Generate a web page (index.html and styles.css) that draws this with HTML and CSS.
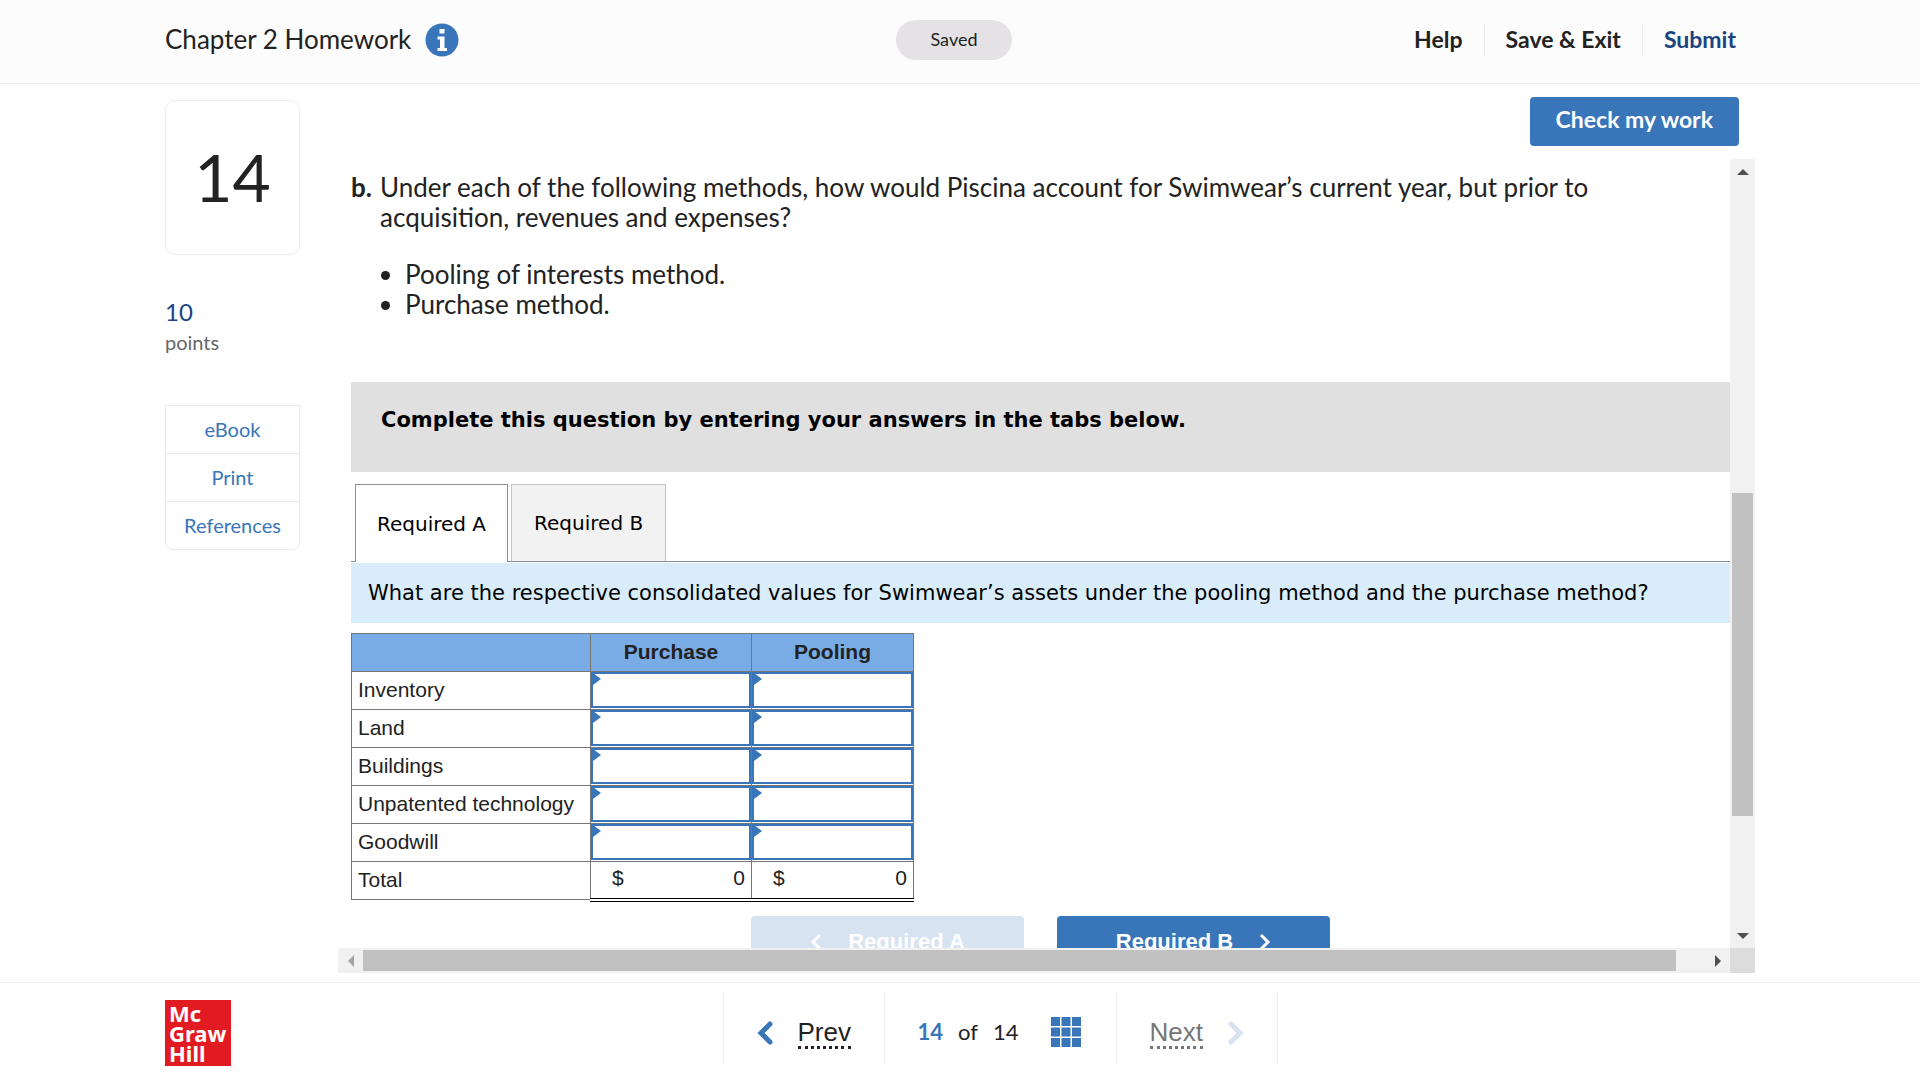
FILE: index.html
```html
<!DOCTYPE html>
<html lang="en">
<head>
    <meta charset="UTF-8">
    <meta name="viewport" content="width=device-width, initial-scale=1.0">
    <title>Chapter 2 Homework</title>
    <link rel="stylesheet" href="styles.css">
</head>
<body>
    <header class="top-bar">
        <div class="assignment">
            <h1>Chapter 2 Homework</h1>
            <button class="info-btn" type="button" aria-label="Assignment info">
                <svg width="34" height="34" viewBox="0 0 34 34">
                    <circle cx="17" cy="17" r="16.5" fill="#3875b9"/>
                    <path fill="#fff" d="M14.5 6h5v4.5h-5zM12.5 13.5h7v11.500h2.500v3h-9.500v-3h2.500v-8.500h-2.500z"/>
                </svg>
            </button>
        </div>
        <span class="saved">Saved</span>
        <nav class="top-links">
            <a href="#">Help</a>
            <a href="#">Save &amp; Exit</a>
            <a href="#" class="submit">Submit</a>
        </nav>
    </header>

    <main>
        <aside>
            <div class="question-number">14</div>
            <div class="points"><span>10</span>points</div>
            <div class="resources">
                <a href="#">eBook</a>
                <a href="#">Print</a>
                <a href="#">References</a>
            </div>
        </aside>

        <section class="question">
            <button class="check-btn" type="button">Check my work</button>
            <div class="scroller">
                <div class="content">
                    <div class="prompt">
                        <b>b.</b>
                        <div>
                            <p>Under each of the following methods, how would Piscina account for Swimwear’s current year, but prior to acquisition, revenues and expenses?</p>
                            <ul>
                                <li>Pooling of interests method.</li>
                                <li>Purchase method.</li>
                            </ul>
                        </div>
                    </div>
                    <div class="instructions">Complete this question by entering your answers in the tabs below.</div>
                    <div class="tabs">
                        <button type="button" class="tab active">Required A</button>
                        <button type="button" class="tab">Required B</button>
                    </div>
                    <p class="tab-question">What are the respective consolidated values for Swimwear’s assets under the pooling method and the purchase method?</p>

                    <table class="answers">
                        <thead>
                            <tr><th class="account"></th><th>Purchase</th><th>Pooling</th></tr>
                        </thead>
                        <tbody>
                            <tr>
                                <td>Inventory</td>
                                <td class="entry"><input type="text" aria-label="Inventory, purchase"></td>
                                <td class="entry"><input type="text" aria-label="Inventory, pooling"></td>
                            </tr>
                            <tr>
                                <td>Land</td>
                                <td class="entry"><input type="text" aria-label="Land, purchase"></td>
                                <td class="entry"><input type="text" aria-label="Land, pooling"></td>
                            </tr>
                            <tr>
                                <td>Buildings</td>
                                <td class="entry"><input type="text" aria-label="Buildings, purchase"></td>
                                <td class="entry"><input type="text" aria-label="Buildings, pooling"></td>
                            </tr>
                            <tr>
                                <td>Unpatented technology</td>
                                <td class="entry"><input type="text" aria-label="Unpatented technology, purchase"></td>
                                <td class="entry"><input type="text" aria-label="Unpatented technology, pooling"></td>
                            </tr>
                            <tr>
                                <td>Goodwill</td>
                                <td class="entry"><input type="text" aria-label="Goodwill, purchase"></td>
                                <td class="entry"><input type="text" aria-label="Goodwill, pooling"></td>
                            </tr>
                            <tr>
                                <td>Total</td>
                                <td class="total"><div><span>$</span><span>0</span></div></td>
                                <td class="total"><div><span>$</span><span>0</span></div></td>
                            </tr>
                        </tbody>
                    </table>

                    <div class="tab-nav">
                        <button type="button" disabled>
                            <svg width="12" height="18" viewBox="0 0 12 18"><path d="M10 2L3 9l7 7" fill="none" stroke="#fff" stroke-width="3"/></svg>
                            Required A
                        </button>
                        <button type="button">
                            Required B
                            <svg width="12" height="18" viewBox="0 0 12 18"><path d="M2 2l7 7-7 7" fill="none" stroke="#fff" stroke-width="3"/></svg>
                        </button>
                    </div>
                </div>

                <div class="bar vertical">
                    <span class="arrow"><svg width="12" height="6" viewBox="0 0 12 6"><path d="M6 0l6 6H0z" fill="#505050"/></svg></span>
                    <span class="before"></span>
                    <span class="thumb"></span>
                    <span class="after"></span>
                    <span class="arrow"><svg width="12" height="6" viewBox="0 0 12 6"><path d="M0 0h12L6 6z" fill="#505050"/></svg></span>
                </div>
                <div class="bar horizontal">
                    <span class="arrow"><svg width="6" height="12" viewBox="0 0 6 12"><path d="M6 0v12L0 6z" fill="#a3a3a3"/></svg></span>
                    <span class="thumb"></span>
                    <span class="after"></span>
                    <span class="arrow"><svg width="6" height="12" viewBox="0 0 6 12"><path d="M0 0l6 6-6 6z" fill="#505050"/></svg></span>
                </div>
                <div class="corner"></div>
            </div>
        </section>
    </main>

    <footer>
        <div class="logo">Mc<br>Graw<br>Hill</div>
        <nav class="pager">
            <a href="#" class="step">
                <svg width="16" height="24" viewBox="0 0 16 24"><path d="M13 3L4 12l9 9" fill="none" stroke="#3875b9" stroke-width="5" stroke-linecap="round"/></svg>
                <span>Prev</span>
            </a>
            <div class="position">
                <b>14</b><span class="of">of</span><span>14</span>
                <button type="button" aria-label="Question list">
                    <svg width="30" height="30" viewBox="0 0 30 30" fill="#3875b9">
                        <path d="M0 0h9v9H0zM10.500 0h9v9h-9zM21 0h9v9h-9zM0 10.500h9v9H0zM10.500 10.500h9v9h-9zM21 10.500h9v9h-9zM0 21h9v9H0zM10.500 21h9v9h-9zM21 21h9v9h-9z"/>
                    </svg>
                </button>
            </div>
            <a href="#" class="step next">
                <span>Next</span>
                <svg width="16" height="24" viewBox="0 0 16 24"><path d="M3 3l9 9-9 9" fill="none" stroke="#d7e3f1" stroke-width="5" stroke-linecap="round"/></svg>
            </a>
        </nav>
    </footer>
</body>
</html>
```
FILE: styles.css
```css
* {
    box-sizing: border-box;
}
body {
    margin: 0;
    height: 100vh;
    display: flex;
    flex-direction: column;
    font-family: Lato, sans-serif;
    color: #222;
    background: #fff;
}
a {
    text-decoration: none;
    color: inherit;
}
button {
    font: inherit;
    border: none;
    padding: 0;
    cursor: pointer;
}
svg {
    display: block;
}

/* header */
.top-bar {
    display: grid;
    grid-template-columns: 1fr auto 1fr;
    align-items: center;
    height: 84px;
    padding: 0 177px 4px 165px;
    background: #fcfcfc;
    border-bottom: 1px solid #eee;
}
.assignment {
    display: flex;
    align-items: center;
    gap: 14px;
}
h1 {
    margin: 0;
    font-size: 26px;
    font-weight: normal;
    line-height: 32px;
    padding-bottom: 2px;
}
.info-btn {
    background: none;
}
.saved {
    width: 116px;
    height: 40px;
    line-height: 38px;
    border-radius: 20px;
    background: #e4e2e5;
    font-size: 18px;
    text-align: center;
}
.top-links {
    display: flex;
    justify-content: flex-end;
    padding-right: 7px;
    font-size: 23px;
    font-weight: bold;
    line-height: 32px;
}
.top-links a {
    padding: 0 21px 2px;
    border-left: 1px solid #eee;
}
.top-links a:first-child {
    border-left: none;
}
.top-links .submit {
    padding-right: 0;
    color: #194480;
}

/* main area */
main {
    flex: 1;
    min-height: 0;
    display: flex;
    gap: 38px;
    padding: 13px 165px 9px;
}
aside {
    width: 135px;
    padding-top: 3px;
}
.question-number {
    height: 155px;
    line-height: 152px;
    border: 1px solid #ececec;
    border-radius: 10px;
    font-size: 66px;
    text-align: center;
}
.points {
    margin-top: 42px;
    font-size: 20px;
    line-height: 30px;
    color: #666;
}
.points span {
    display: block;
    font-size: 24px;
    color: #194480;
}
.resources {
    margin-top: 48px;
    border: 1px solid #e9e9e9;
    border-radius: 0 0 8px 8px;
    font-size: 20px;
    text-align: center;
    color: #3875b9;
}
.resources a {
    display: block;
    line-height: 47px;
}
.resources a + a {
    border-top: 1px solid #e9e9e9;
}
.question {
    flex: 1;
    min-width: 0;
    display: flex;
    flex-direction: column;
    gap: 13px;
}
.check-btn {
    align-self: flex-end;
    margin-right: 16px;
    padding: 0 26px 5px;
    height: 49px;
    border-radius: 4px;
    background: #3875b9;
    color: #fff;
    font-size: 23px;
    font-weight: bold;
}

/* scroll area */
.scroller {
    flex: 1;
    min-height: 0;
    display: grid;
    grid-template: minmax(0, 1fr) 25px / minmax(0, 1fr) 25px;
}
.content {
    overflow: hidden;
    padding: 13px 0 0 13px;
}
.bar {
    display: flex;
    background: #f1f1f1;
}
.vertical {
    flex-direction: column;
}
.arrow {
    flex: none;
    width: 25px;
    height: 25px;
    display: flex;
    align-items: center;
    justify-content: center;
}
.thumb {
    background: #c1c1c1;
}
.vertical .thumb {
    flex: 323;
    margin: 0 2px;
}
.vertical .before {
    flex: 309;
}
.vertical .after {
    flex: 107;
}
.horizontal .thumb {
    flex: 1313;
    margin: 2px 0;
}
.horizontal .after {
    flex: 29;
}
.corner {
    background: #dcdcdc;
}

/* question text */
.prompt {
    display: flex;
    font-size: 26px;
    line-height: 30px;
}
.prompt > b {
    width: 29px;
    flex: none;
}
.prompt p {
    margin: 0;
    padding-right: 100px;
}
.prompt ul {
    margin: 27px 0 63px;
    padding-left: 25px;
}
.instructions {
    height: 90px;
    padding: 23px 30px;
    background: #e0e0e0;
    font: bold 21px/30px "DejaVu Sans", sans-serif;
    color: #000;
}
.tabs {
    display: flex;
    gap: 3px;
    margin-top: 12px;
    padding-left: 4px;
    border-bottom: 1px solid #8c8c8c;
}
.tab {
    height: 77px;
    padding: 0 22px;
    border: 1px solid #c4c4c4;
    border-bottom: none;
    background: #f2f2f2;
    font: 20px "DejaVu Sans", sans-serif;
    color: #000;
}
.tab.active {
    height: 78px;
    margin-bottom: -1px;
    padding: 0 21px;
    border-color: #8c8c8c;
    background: #fff;
}
.tab-question {
    margin: 1px 0 10px;
    padding: 0 17px;
    background: #d9ecfa;
    font: 21px/60px "DejaVu Sans", sans-serif;
    color: #000;
}

/* answer table */
.answers {
    border-collapse: collapse;
    font: 21px "Liberation Sans", Arial, sans-serif;
}
.answers th,
.answers td {
    width: 161px;
    height: 38px;
    padding: 0 0 2px;
    border: 1px solid #767676;
}
.answers th {
    background: #79ace5;
}
.answers th.account {
    width: 239px;
}
.answers th:last-child {
    width: 162px;
}
.answers td:first-child {
    padding-left: 6px;
}
.answers .entry {
    position: relative;
    padding: 0 0 1px;
}
.entry input {
    display: block;
    width: 100%;
    height: 36px;
    border: 2px solid #3875b9;
    padding: 0 8px;
    font: inherit;
    text-align: right;
}
.entry::before {
    content: "";
    position: absolute;
    left: 2px;
    top: 1px;
    border: 6px solid transparent;
    border-left: 8px solid #3875b9;
    border-right: none;
}
.answers td.total {
    border-top-color: #000;
    border-bottom: 4px double #000;
}
.total div {
    display: flex;
    justify-content: space-between;
    padding: 0 6px 2px 21px;
}

/* buttons under the table */
.tab-nav {
    display: flex;
    justify-content: center;
    gap: 33px;
    margin-top: 14px;
}
.tab-nav button {
    display: flex;
    align-items: center;
    justify-content: center;
    gap: 26px;
    width: 273px;
    height: 53px;
    border-radius: 4px;
    background: #3875b9;
    color: #fff;
    font: bold 22px "Liberation Sans", Arial, sans-serif;
}
.tab-nav button:disabled {
    background: #d7e3f1;
}

/* footer */
footer {
    display: flex;
    align-items: center;
    height: 98px;
    padding: 0 151px 6px 165px;
    border-top: 1px solid #eee;
}
.logo {
    width: 66px;
    height: 66px;
    padding: 3px 4px;
    margin-top: 8px;
    background: #e21b23;
    color: #fff;
    font: bold 22px/20px "Noto Sans", sans-serif;
}
.pager {
    display: flex;
    margin: 0 auto;
    border-right: 1px solid #eee;
}
.pager > * {
    display: flex;
    align-items: center;
    height: 73px;
    border-left: 1px solid #eee;
}
.step {
    width: 161px;
    padding: 9px 0 0 33px;
    gap: 25px;
    font: 26px/28px "Liberation Sans", Arial, sans-serif;
}
.step span {
    border-bottom: 3px dotted #222;
}
.next {
    color: #767676;
}
.next span {
    border-color: #767676;
}
.position {
    width: 232px;
    padding: 6px 0 0 33px;
    font-size: 22px;
}
.position b {
    color: #3875b9;
}
.position .of {
    margin: 0 15px;
}
.position button {
    margin-left: auto;
    margin-right: 35px;
    background: none;
}
```
